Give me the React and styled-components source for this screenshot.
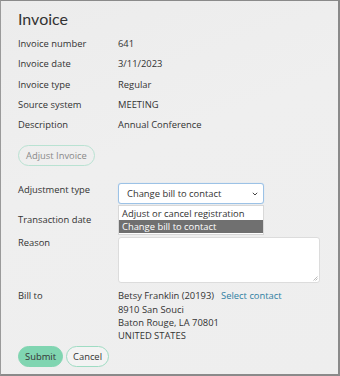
import React from 'react';
import styled, { createGlobalStyle } from 'styled-components';

const Global = createGlobalStyle`
  html, body { margin: 0; padding: 0; }
  body { font-family: "Open Sans", "Noto Sans", sans-serif; }
`;

const Frame = styled.div`
  box-sizing: border-box;
  width: 340px;
  height: 376px;
  background: linear-gradient(160deg, #ececec 0%, #efefef 40%, #eeeeee 100%);
  border-top: 1px solid #8a8a8a;
  border-left: 1px solid #9a9a9a;
  border-right: 2px solid #8a8a8a;
  border-bottom: 2px solid #8a8a8a;
  padding: 7px 0 0 17px;
  color: #333;
  overflow: hidden;
`;

const Title = styled.h1`
  margin: 0 0 4px;
  font-family: "Lato", "Open Sans", sans-serif;
  font-weight: 400;
  font-size: 16px;
  line-height: 22px;
  color: #333;
`;

const Grid = styled.div`
  display: grid;
  grid-template-columns: 100px 1fr;
  font-size: 9.4px;
`;

const Label = styled.div`
  line-height: ${p => p.$lh || '20.3px'};
  padding-top: ${p => p.$pt || 0}px;
  color: #333;
`;

const Value = styled.div`
  line-height: 20.3px;
  color: #333;
`;

const Pill = styled.button`
  font-family: inherit;
  font-size: 9.4px;
  height: 21px;
  padding: 0 ${p => p.$px || 7}px;
  border-radius: 11px;
  border: 1px solid ${p => p.$border || '#b5e1cf'};
  background: ${p => p.$fill || 'transparent'};
  color: ${p => p.$color || '#333'};
  cursor: pointer;
`;

const AdjustRow = styled.div`
  margin: 7px 0 17px;
`;

const FieldCol = styled.div`
  position: relative;
`;

const Select = styled.div`
  box-sizing: border-box;
  width: 146px;
  height: 21px;
  background: #fff;
  border: 1px solid #9cc2e6;
  border-radius: 3px;
  box-shadow: 0 0 1px #b7d3ee;
  display: flex;
  align-items: center;
  justify-content: space-between;
  padding: 0 5px 0 8px;
  font-size: 9.4px;
`;

const Options = styled.ul`
  position: absolute;
  top: 22px;
  left: 0;
  width: 146px;
  box-sizing: border-box;
  margin: 0;
  padding: 1px 0;
  list-style: none;
  background: #fff;
  border: 1px solid #d8d8d8;
  z-index: 2;
`;

const Option = styled.li`
  line-height: 13px;
  padding: 0 2px 0 3px;
  font-size: 9.4px;
  background: ${p => (p.$active ? '#707070' : '#fff')};
  color: ${p => (p.$active ? '#fff' : '#333')};
`;

const TextArea = styled.div`
  box-sizing: border-box;
  width: 202px;
  height: 46px;
  background: #fff;
  border: 1px solid #dcdcdc;
  border-radius: 3px;
  margin-top: 11px;
  position: relative;
`;

const Grip = styled.svg`
  position: absolute;
  right: 1px;
  bottom: 1px;
`;

const Address = styled.div`
  line-height: 13.2px;
  padding-top: 6px;
`;

const Link = styled.a`
  color: #2f7fa3;
  margin-left: 7px;
  text-decoration: none;
`;

const Actions = styled.div`
  display: flex;
  gap: 3px;
  margin-top: 4px;
`;

export default function App() {
  return (
    <Frame>
      <Global />
      <Title>Invoice</Title>
      <Grid>
        <Label>Invoice number</Label><Value>641</Value>
        <Label>Invoice date</Label><Value>3/11/2023</Value>
        <Label>Invoice type</Label><Value>Regular</Value>
        <Label>Source system</Label><Value>MEETING</Value>
        <Label>Description</Label><Value>Annual Conference</Value>
      </Grid>
      <AdjustRow>
        <Pill $color="#8a8a8a" $border="#b9e2d2">Adjust Invoice</Pill>
      </AdjustRow>
      <Grid>
        <Label $lh="13px" $pt={0}>Adjustment type</Label>
        <FieldCol>
          <Select>
            <span>Change bill to contact</span>
            <svg width="6" height="4" viewBox="0 0 6 4">
              <path d="M0.8 0.8 L3 3 L5.2 0.8" fill="none" stroke="#444" strokeWidth="1" />
            </svg>
          </Select>
          <Options>
            <Option>Adjust or cancel registration</Option>
            <Option $active>Change bill to contact</Option>
          </Options>
        </FieldCol>
        <Label $lh="13px" $pt={9}>Transaction date</Label>
        <div />
        <Label $lh="13px" $pt={10}>Reason</Label>
        <TextArea>
          <Grip width="5" height="5" viewBox="0 0 5 5">
            <path d="M0.5 4.5 L4.5 0.5 M2.5 4.5 L4.5 2.5" stroke="#aaa" strokeWidth="0.8" />
          </Grip>
        </TextArea>
        <Label $lh="13px" $pt={6}>Bill to</Label>
        <Address>
          <div>Betsy Franklin (20193)<Link href="#">Select contact</Link></div>
          <div>8910 San Souci</div>
          <div>Baton Rouge, LA 70801</div>
          <div>UNITED STATES</div>
        </Address>
      </Grid>
      <Actions>
        <Pill $fill="#80d5b1" $border="#80d5b1" $px={6}>Submit</Pill>
        <Pill $fill="#f3f3f3" $border="#9fdcc3" $px={6}>Cancel</Pill>
      </Actions>
    </Frame>
  );
}
